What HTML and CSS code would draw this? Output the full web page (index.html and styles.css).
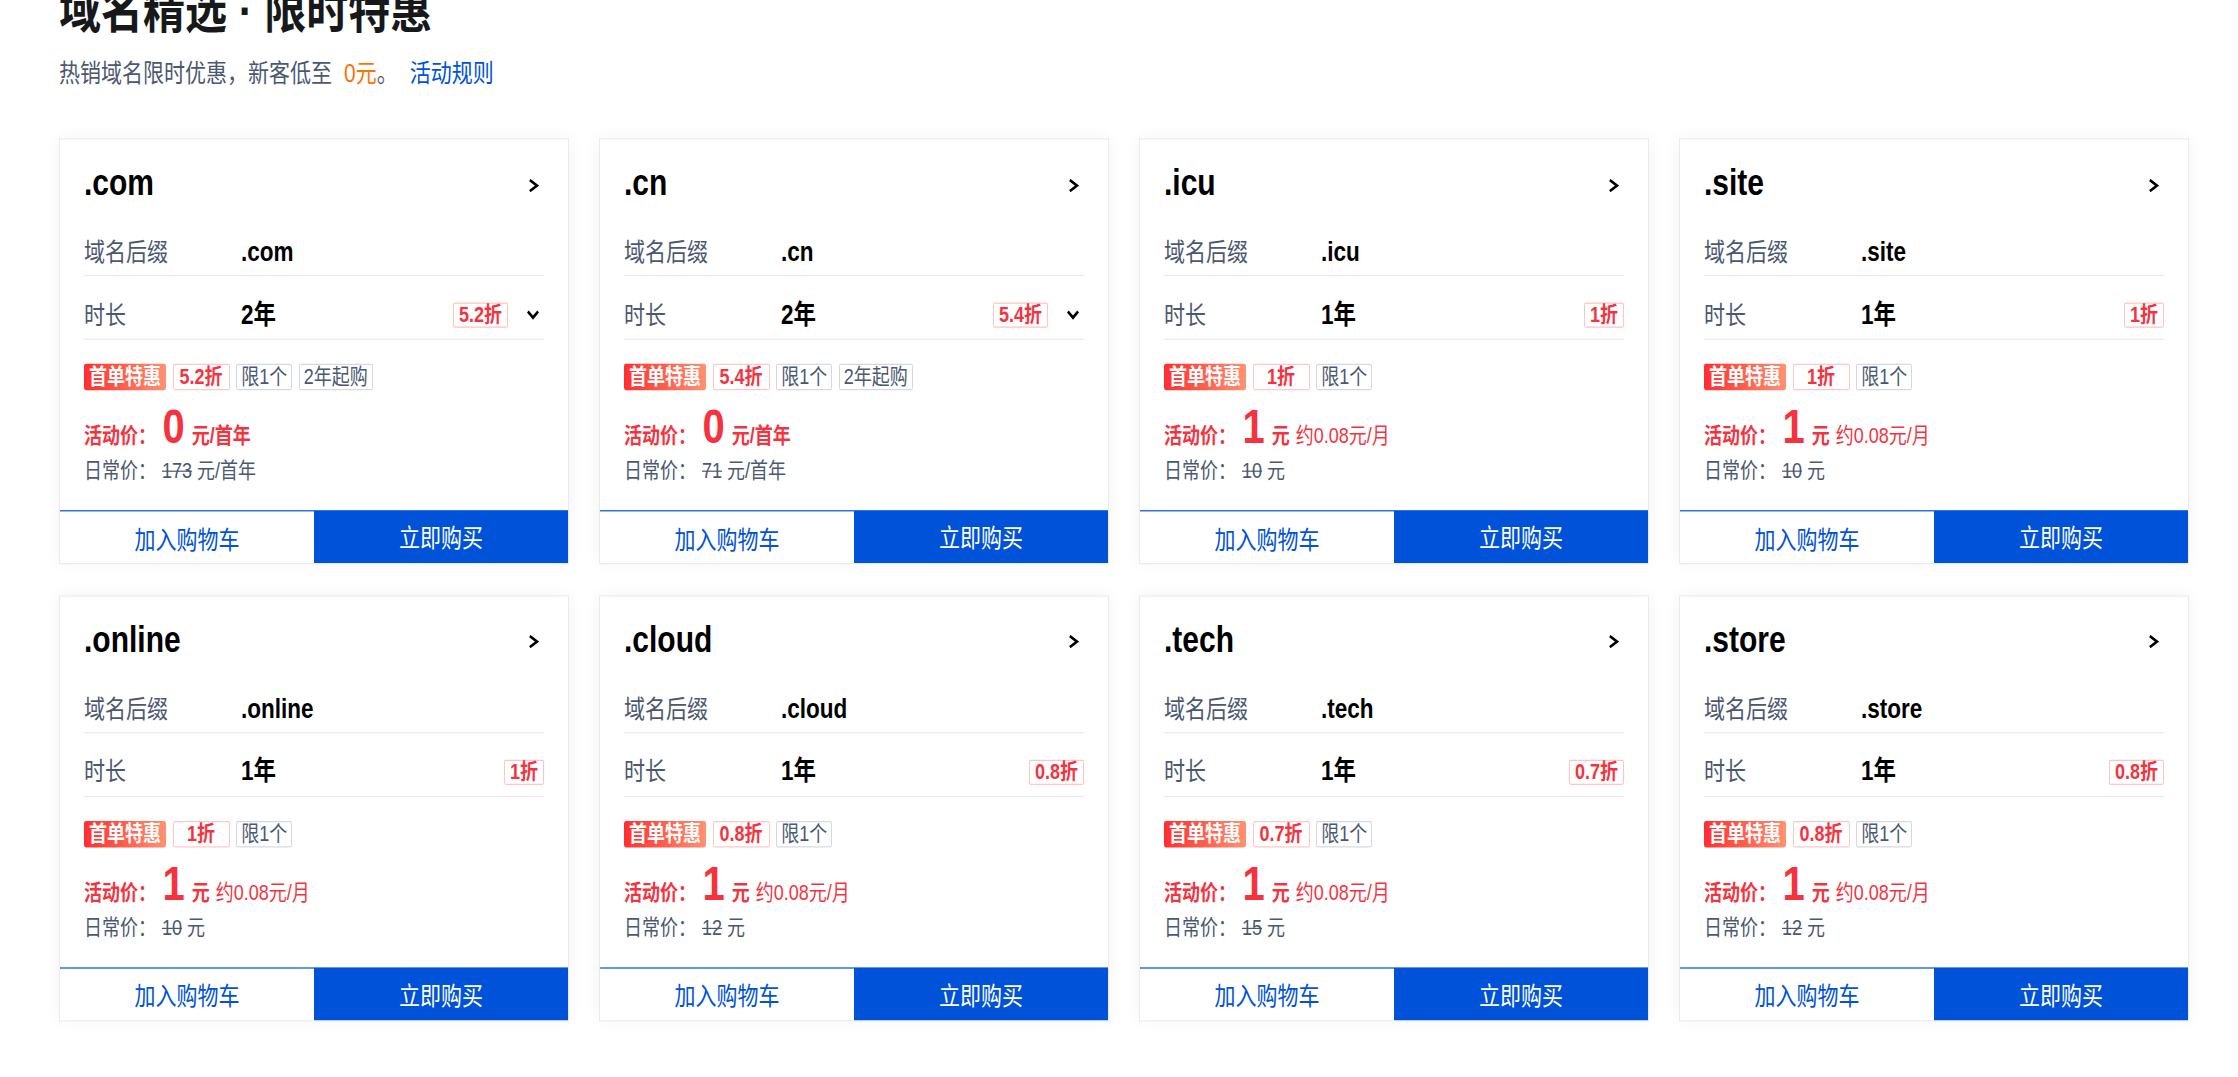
FILE: index.html
```html
<!DOCTYPE html>
<html lang="zh-CN">
<head>
<meta charset="utf-8">
<title>域名精选 · 限时特惠</title>
<link rel="stylesheet" href="styles.css">
</head>
<body>
<div class="page">
  <header class="intro">
    <h1 class="intro-title">域名精选 · 限时特惠</h1>
    <p class="intro-desc">热销域名限时优惠，新客低至<span class="hl">0元</span>。<a class="rules" href="#">活动规则</a></p>
  </header>

  <div class="grid">
    <!-- .com -->
    <article class="card">
      <div class="card-body">
        <div class="card-head"><h3 class="tld">.com</h3><svg class="go" viewBox="0 0 11 11"><path d="M1.8 0.9 L9 5.5 L1.8 10.1"/></svg></div>
        <div class="spec"><span class="spec-label">域名后缀</span><span class="spec-value">.com</span></div>
        <div class="spec"><span class="spec-label">时长</span><span class="spec-value">2年</span><span class="off">5.2折</span><svg class="drop" viewBox="0 0 14 9"><path d="M1.5 1.5 L7 7 L12.5 1.5"/></svg></div>
        <div class="tags"><span class="tag tag-first">首单特惠</span><span class="tag tag-red">5.2折</span><span class="tag">限1个</span><span class="tag">2年起购</span></div>
        <p class="price"><span class="price-label">活动价：</span><span class="price-num">0</span><span class="price-unit">元/首年</span></p>
        <p class="orig">日常价：<s class="orig-num">173</s> 元/首年</p>
      </div>
      <div class="actions"><button class="btn-cart">加入购物车</button><button class="btn-buy">立即购买</button></div>
    </article>

    <!-- .cn -->
    <article class="card">
      <div class="card-body">
        <div class="card-head"><h3 class="tld">.cn</h3><svg class="go" viewBox="0 0 11 11"><path d="M1.8 0.9 L9 5.5 L1.8 10.1"/></svg></div>
        <div class="spec"><span class="spec-label">域名后缀</span><span class="spec-value">.cn</span></div>
        <div class="spec"><span class="spec-label">时长</span><span class="spec-value">2年</span><span class="off">5.4折</span><svg class="drop" viewBox="0 0 14 9"><path d="M1.5 1.5 L7 7 L12.5 1.5"/></svg></div>
        <div class="tags"><span class="tag tag-first">首单特惠</span><span class="tag tag-red">5.4折</span><span class="tag">限1个</span><span class="tag">2年起购</span></div>
        <p class="price"><span class="price-label">活动价：</span><span class="price-num">0</span><span class="price-unit">元/首年</span></p>
        <p class="orig">日常价：<s class="orig-num">71</s> 元/首年</p>
      </div>
      <div class="actions"><button class="btn-cart">加入购物车</button><button class="btn-buy">立即购买</button></div>
    </article>

    <!-- .icu -->
    <article class="card">
      <div class="card-body">
        <div class="card-head"><h3 class="tld">.icu</h3><svg class="go" viewBox="0 0 11 11"><path d="M1.8 0.9 L9 5.5 L1.8 10.1"/></svg></div>
        <div class="spec"><span class="spec-label">域名后缀</span><span class="spec-value">.icu</span></div>
        <div class="spec"><span class="spec-label">时长</span><span class="spec-value">1年</span><span class="off">1折</span></div>
        <div class="tags"><span class="tag tag-first">首单特惠</span><span class="tag tag-red">1折</span><span class="tag">限1个</span></div>
        <p class="price"><span class="price-label">活动价：</span><span class="price-num">1</span><span class="price-unit">元</span><span class="price-month">约0.08元/月</span></p>
        <p class="orig">日常价：<s class="orig-num">10</s> 元</p>
      </div>
      <div class="actions"><button class="btn-cart">加入购物车</button><button class="btn-buy">立即购买</button></div>
    </article>

    <!-- .site -->
    <article class="card">
      <div class="card-body">
        <div class="card-head"><h3 class="tld">.site</h3><svg class="go" viewBox="0 0 11 11"><path d="M1.8 0.9 L9 5.5 L1.8 10.1"/></svg></div>
        <div class="spec"><span class="spec-label">域名后缀</span><span class="spec-value">.site</span></div>
        <div class="spec"><span class="spec-label">时长</span><span class="spec-value">1年</span><span class="off">1折</span></div>
        <div class="tags"><span class="tag tag-first">首单特惠</span><span class="tag tag-red">1折</span><span class="tag">限1个</span></div>
        <p class="price"><span class="price-label">活动价：</span><span class="price-num">1</span><span class="price-unit">元</span><span class="price-month">约0.08元/月</span></p>
        <p class="orig">日常价：<s class="orig-num">10</s> 元</p>
      </div>
      <div class="actions"><button class="btn-cart">加入购物车</button><button class="btn-buy">立即购买</button></div>
    </article>

    <!-- .online -->
    <article class="card">
      <div class="card-body">
        <div class="card-head"><h3 class="tld">.online</h3><svg class="go" viewBox="0 0 11 11"><path d="M1.8 0.9 L9 5.5 L1.8 10.1"/></svg></div>
        <div class="spec"><span class="spec-label">域名后缀</span><span class="spec-value">.online</span></div>
        <div class="spec"><span class="spec-label">时长</span><span class="spec-value">1年</span><span class="off">1折</span></div>
        <div class="tags"><span class="tag tag-first">首单特惠</span><span class="tag tag-red">1折</span><span class="tag">限1个</span></div>
        <p class="price"><span class="price-label">活动价：</span><span class="price-num">1</span><span class="price-unit">元</span><span class="price-month">约0.08元/月</span></p>
        <p class="orig">日常价：<s class="orig-num">10</s> 元</p>
      </div>
      <div class="actions"><button class="btn-cart">加入购物车</button><button class="btn-buy">立即购买</button></div>
    </article>

    <!-- .cloud -->
    <article class="card">
      <div class="card-body">
        <div class="card-head"><h3 class="tld">.cloud</h3><svg class="go" viewBox="0 0 11 11"><path d="M1.8 0.9 L9 5.5 L1.8 10.1"/></svg></div>
        <div class="spec"><span class="spec-label">域名后缀</span><span class="spec-value">.cloud</span></div>
        <div class="spec"><span class="spec-label">时长</span><span class="spec-value">1年</span><span class="off">0.8折</span></div>
        <div class="tags"><span class="tag tag-first">首单特惠</span><span class="tag tag-red">0.8折</span><span class="tag">限1个</span></div>
        <p class="price"><span class="price-label">活动价：</span><span class="price-num">1</span><span class="price-unit">元</span><span class="price-month">约0.08元/月</span></p>
        <p class="orig">日常价：<s class="orig-num">12</s> 元</p>
      </div>
      <div class="actions"><button class="btn-cart">加入购物车</button><button class="btn-buy">立即购买</button></div>
    </article>

    <!-- .tech -->
    <article class="card">
      <div class="card-body">
        <div class="card-head"><h3 class="tld">.tech</h3><svg class="go" viewBox="0 0 11 11"><path d="M1.8 0.9 L9 5.5 L1.8 10.1"/></svg></div>
        <div class="spec"><span class="spec-label">域名后缀</span><span class="spec-value">.tech</span></div>
        <div class="spec"><span class="spec-label">时长</span><span class="spec-value">1年</span><span class="off">0.7折</span></div>
        <div class="tags"><span class="tag tag-first">首单特惠</span><span class="tag tag-red">0.7折</span><span class="tag">限1个</span></div>
        <p class="price"><span class="price-label">活动价：</span><span class="price-num">1</span><span class="price-unit">元</span><span class="price-month">约0.08元/月</span></p>
        <p class="orig">日常价：<s class="orig-num">15</s> 元</p>
      </div>
      <div class="actions"><button class="btn-cart">加入购物车</button><button class="btn-buy">立即购买</button></div>
    </article>

    <!-- .store -->
    <article class="card">
      <div class="card-body">
        <div class="card-head"><h3 class="tld">.store</h3><svg class="go" viewBox="0 0 11 11"><path d="M1.8 0.9 L9 5.5 L1.8 10.1"/></svg></div>
        <div class="spec"><span class="spec-label">域名后缀</span><span class="spec-value">.store</span></div>
        <div class="spec"><span class="spec-label">时长</span><span class="spec-value">1年</span><span class="off">0.8折</span></div>
        <div class="tags"><span class="tag tag-first">首单特惠</span><span class="tag tag-red">0.8折</span><span class="tag">限1个</span></div>
        <p class="price"><span class="price-label">活动价：</span><span class="price-num">1</span><span class="price-unit">元</span><span class="price-month">约0.08元/月</span></p>
        <p class="orig">日常价：<s class="orig-num">12</s> 元</p>
      </div>
      <div class="actions"><button class="btn-cart">加入购物车</button><button class="btn-buy">立即购买</button></div>
    </article>
  </div>
</div>
</body>
</html>
```

FILE: styles.css
```css
html, body {
  margin: 0;
  padding: 0;
  background: #fff;
}

body {
  min-height: 1050px;
  font-family: "Liberation Sans", "Noto Sans CJK SC", sans-serif;
  color: #16181a;
}

/* the whole promo block is drawn slightly taller than wide */
.page {
  padding-left: 59px;
  transform: scaleY(1.2);
  transform-origin: 0 0;
}

/* ---------- intro ---------- */
.intro-title {
  margin: -19.5px 0 0;
  font-size: 42px;
  line-height: 50px;
  font-weight: 700;
  color: #16181a;
}

.intro-desc {
  margin: 11.8px 0 0;
  font-size: 21px;
  line-height: 30px;
  color: #4b5870;
}

.hl {
  margin-left: 12px;
  color: #ff7200;
}

.rules {
  margin-left: 12px;
  color: #0052d9;
  text-decoration: none;
}

/* ---------- grid ---------- */
.grid {
  margin-top: 39.3px;
  display: grid;
  grid-template-columns: repeat(4, 510px);
  column-gap: 30px;
  row-gap: 25.8px;
}

.card {
  box-sizing: border-box;
  height: 355px;
  border: 1px solid #e8ebf0;
  background: #fff;
  box-shadow: 0 0 14px rgba(30, 45, 80, 0.05);
  display: flex;
  flex-direction: column;
}

.card-body {
  padding: 0 24px;
}

.card-head {
  display: flex;
  align-items: center;
  justify-content: space-between;
  padding: 21.2px 0 10.3px;
}

.tld {
  margin: 0;
  font-size: 30px;
  line-height: 30px;
  font-weight: 700;
  color: #000;
}

.go {
  width: 11px;
  height: 11px;
  margin: 3.5px 5px 0 0;
  fill: none;
  stroke: #000;
  stroke-width: 2.4;
}

.spec {
  display: flex;
  align-items: center;
  padding: 22.2px 0 9.05px;
  line-height: 20px;
  border-bottom: 1px solid #e8eaef;
}

.spec-label {
  width: 157px;
  flex: none;
  font-size: 21px;
  color: #4b5870;
}

.spec-value {
  font-size: 22.5px;
  font-weight: 700;
  color: #000;
}

.off {
  margin-left: auto;
  padding: 0 5px;
  border: 1px solid #ffc4c4;
  border-radius: 2px;
  font-size: 18px;
  line-height: 19px;
  font-weight: 700;
  color: #f5333f;
}

.drop {
  width: 14px;
  height: 8.4px;
  margin: 0 4px 0 18px;
  fill: none;
  stroke: #000;
  stroke-width: 2.6;
}

/* ---------- tags ---------- */
.tags {
  display: flex;
  gap: 6.6px;
  margin-top: 20.1px;
}

.tag {
  box-sizing: border-box;
  height: 22px;
  padding: 0 4px;
  border: 1px solid #d3d9e2;
  border-radius: 2px;
  font-size: 18px;
  line-height: 20px;
  color: #4b5870;
}

.tag-first {
  padding: 0 5px;
  border: 0;
  line-height: 22px;
  font-weight: 700;
  color: #fff;
  background: linear-gradient(90deg, #ff2f2f 0%, #ff5a4a 45%, #ff9274 100%);
}

.tag-red {
  min-width: 57px;
  text-align: center;
  border-color: #ffc8c8;
  font-weight: 700;
  color: #f5333f;
}

/* ---------- price ---------- */
.price {
  margin: 15.15px 0 0;
  font-size: 18px;
  line-height: 30px;
  color: #f5333f;
}

.price-label {
  font-weight: 700;
}

.price-num {
  margin: 0 7px 0 6.5px;
  font-size: 40px;
  font-weight: 700;
}

.price-unit {
  font-weight: 700;
}

.price-month {
  margin-left: 6px;
}

.orig {
  margin: 1.5px 0 0;
  font-size: 18px;
  line-height: 24px;
  color: #4b5870;
}

.orig-num {
  margin-left: 6px;
}

/* ---------- actions ---------- */
.actions {
  margin-top: auto;
  display: flex;
  height: 44px;
}

.actions button {
  flex: 1;
  margin: 0;
  border: 0;
  font-family: inherit;
  font-size: 21px;
  cursor: pointer;
}

.btn-cart {
  box-sizing: border-box;
  border-top: 1px solid #0052d9 !important;
  background: #fff;
  color: #0052d9;
}

.btn-buy {
  background: #0052d9;
  color: #fff;
}
```
